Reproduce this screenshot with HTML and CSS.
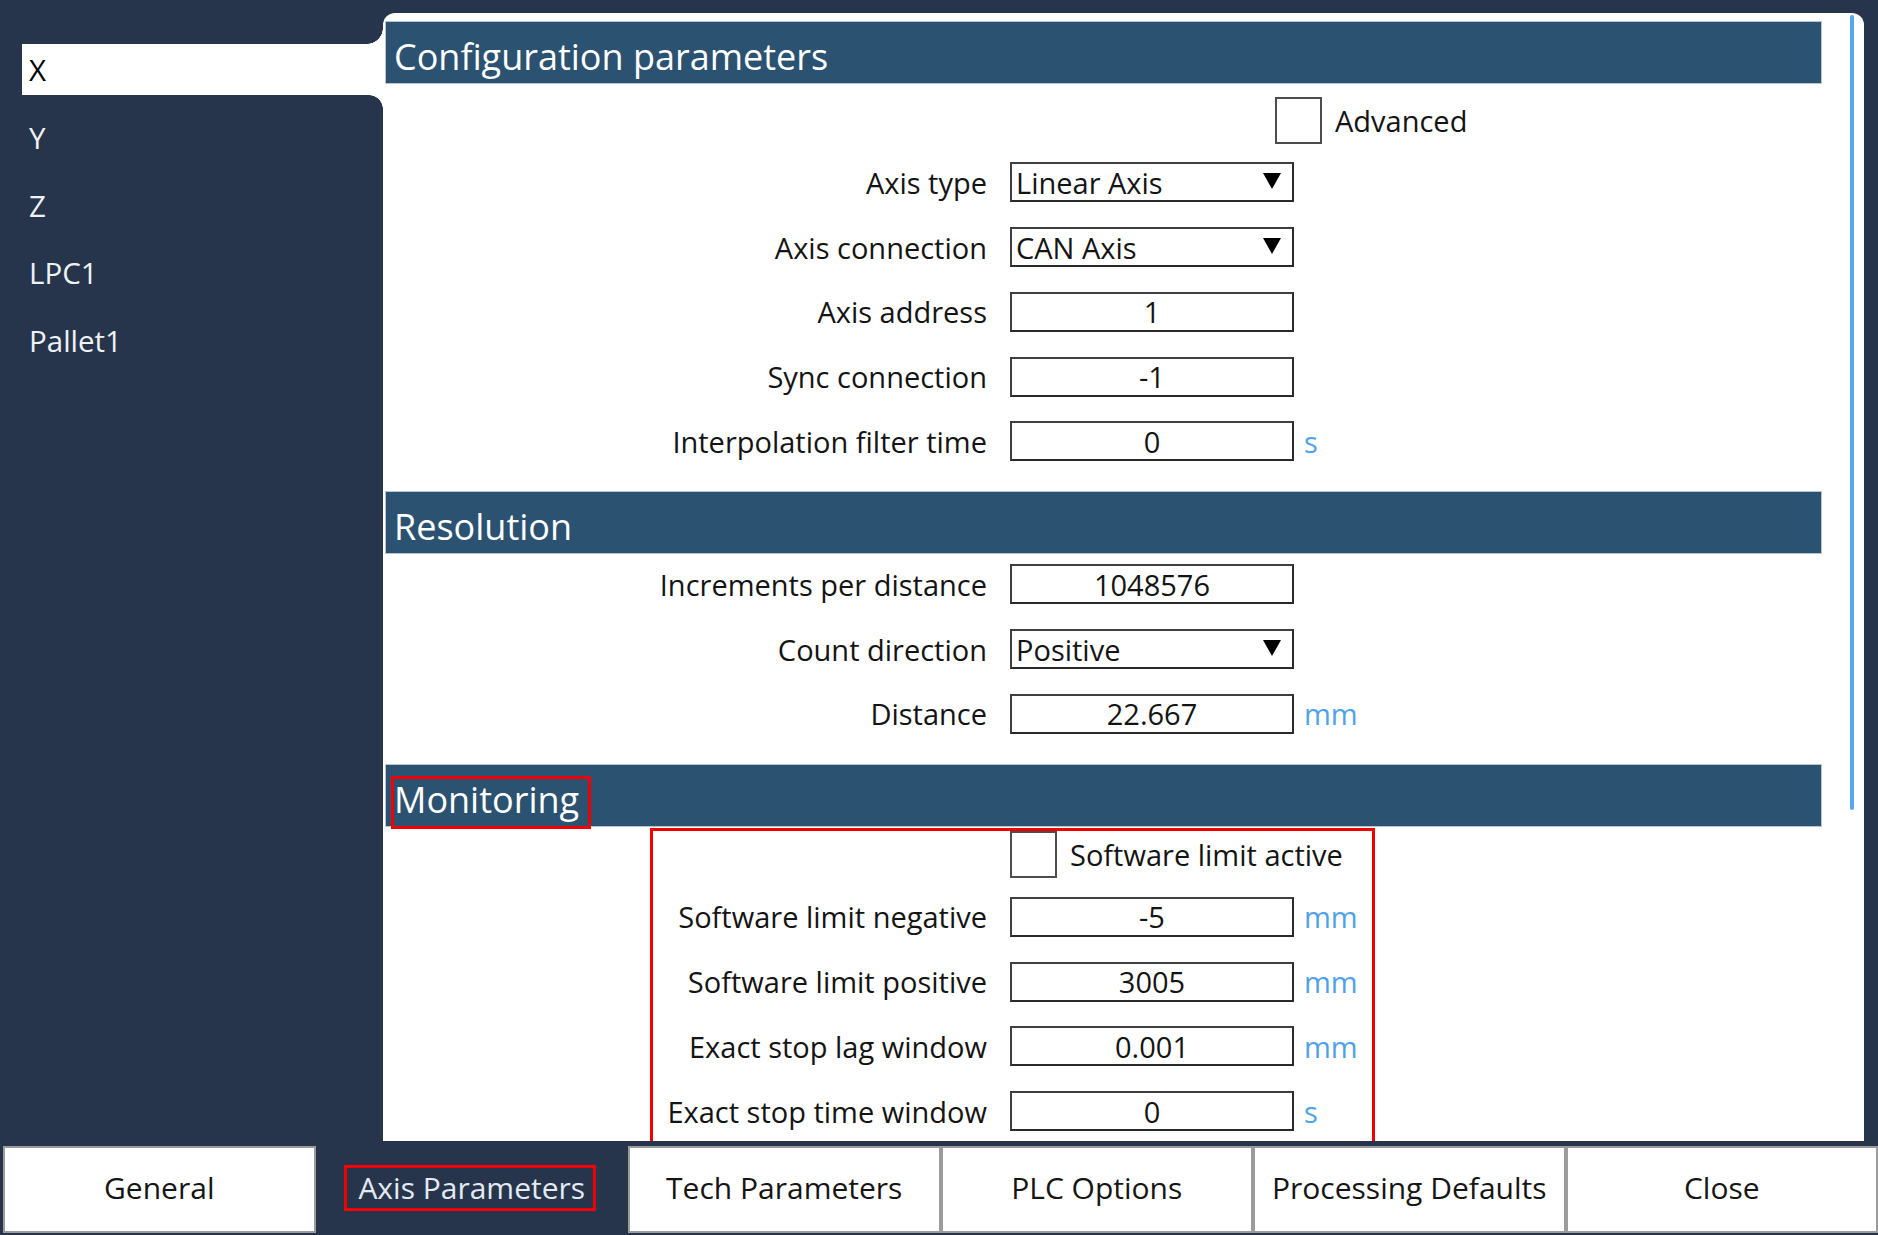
FILE: index.html
```html
<!DOCTYPE html>
<html lang="en">
<head>
<meta charset="utf-8">
<title>Axis Parameters</title>
<link rel="stylesheet" href="styles.css">
</head>
<body>
<div class="app">
  <div class="main">
    <nav class="sidebar">
      <div class="side-item active">X</div>
      <div class="side-item">Y</div>
      <div class="side-item">Z</div>
      <div class="side-item">LPC1</div>
      <div class="side-item">Pallet1</div>
    </nav>
    <section class="panel">
      <div class="scroll-thumb"></div>

      <div class="group">
        <h2 class="band"><span class="band-title">Configuration parameters</span></h2>
        <div class="group-body pad-top">
          <div class="row check-row">
            <span class="cb cb-adv"></span><span class="cb-label">Advanced</span>
          </div>
          <div class="row">
            <span class="lbl">Axis type</span>
            <div class="field select"><span class="sel-text">Linear Axis</span><svg class="arrow" viewBox="0 0 18 16" width="18" height="16"><polygon points="0,0 18,0 9,16" fill="#000"/></svg></div>
          </div>
          <div class="row">
            <span class="lbl">Axis connection</span>
            <div class="field select"><span class="sel-text">CAN Axis</span><svg class="arrow" viewBox="0 0 18 16" width="18" height="16"><polygon points="0,0 18,0 9,16" fill="#000"/></svg></div>
          </div>
          <div class="row">
            <span class="lbl">Axis address</span>
            <div class="field">1</div>
          </div>
          <div class="row">
            <span class="lbl">Sync connection</span>
            <div class="field">-1</div>
          </div>
          <div class="row">
            <span class="lbl">Interpolation filter time</span>
            <div class="field">0</div>
            <span class="unit">s</span>
          </div>
        </div>
      </div>

      <div class="group">
        <h2 class="band"><span class="band-title">Resolution</span></h2>
        <div class="group-body">
          <div class="row">
            <span class="lbl">Increments per distance</span>
            <div class="field">1048576</div>
          </div>
          <div class="row">
            <span class="lbl">Count direction</span>
            <div class="field select"><span class="sel-text">Positive</span><svg class="arrow" viewBox="0 0 18 16" width="18" height="16"><polygon points="0,0 18,0 9,16" fill="#000"/></svg></div>
          </div>
          <div class="row">
            <span class="lbl">Distance</span>
            <div class="field">22.667</div>
            <span class="unit">mm</span>
          </div>
        </div>
      </div>

      <div class="group">
        <h2 class="band"><span class="band-title hl-title">Monitoring</span></h2>
        <div class="group-body hl-body">
          <div class="row check-row">
            <span class="cb"></span><span class="cb-label">Software limit active</span>
          </div>
          <div class="row">
            <span class="lbl">Software limit negative</span>
            <div class="field">-5</div>
            <span class="unit">mm</span>
          </div>
          <div class="row">
            <span class="lbl">Software limit positive</span>
            <div class="field">3005</div>
            <span class="unit">mm</span>
          </div>
          <div class="row">
            <span class="lbl">Exact stop lag window</span>
            <div class="field">0.001</div>
            <span class="unit">mm</span>
          </div>
          <div class="row">
            <span class="lbl">Exact stop time window</span>
            <div class="field">0</div>
            <span class="unit">s</span>
          </div>
        </div>
      </div>
    </section>
  </div>

  <div class="tabs">
    <div class="tab">General</div>
    <div class="tab selected"><span class="hl-tab">Axis Parameters</span></div>
    <div class="tab">Tech Parameters</div>
    <div class="tab">PLC Options</div>
    <div class="tab">Processing Defaults</div>
    <div class="tab">Close</div>
  </div>
</div>
</body>
</html>
```

FILE: styles.css
```css
* { box-sizing: border-box; }

html, body {
  margin: 0;
  padding: 0;
}

body {
  width: 1878px;
  height: 1235px;
  overflow: hidden;
  background: #26354b;
  font-family: "Open Sans", "Noto Sans", "DejaVu Sans", sans-serif;
  color: #141414;
}

.app {
  display: flex;
  flex-direction: column;
  height: 1235px;
}

.main {
  display: flex;
  height: 1146px;
}

/* ---------- sidebar ---------- */
.sidebar {
  width: 383px;
  flex: none;
  padding: 44px 0 0 22px;
  display: flex;
  flex-direction: column;
  gap: 16.75px;
}

.side-item {
  position: relative;
  height: 51px;
  display: flex;
  align-items: center;
  padding-left: 7px;
  font-size: 29.5px;
  color: #eef2f6;
}

.side-item.active {
  background: #ffffff;
  color: #000;
}

.side-item.active::before {
  content: "";
  position: absolute;
  right: 0;
  top: -16px;
  width: 16px;
  height: 16px;
  background: radial-gradient(circle at 0 0, rgba(255,255,255,0) 15.5px, #ffffff 16px);
}

.side-item.active::after {
  content: "";
  position: absolute;
  right: 0;
  bottom: -14px;
  width: 14px;
  height: 14px;
  background: radial-gradient(circle at 0 100%, rgba(255,255,255,0) 13.5px, #ffffff 14px);
}

/* ---------- panel ---------- */
.panel {
  position: relative;
  flex: 1;
  margin: 13px 14px 5px 0;
  background: #ffffff;
  border-radius: 12px 12px 0 0;
  padding: 9px 43px 0 3px;
  overflow: hidden;
}

.scroll-thumb {
  position: absolute;
  right: 10px;
  top: 2px;
  width: 4px;
  height: 795px;
  border-radius: 2px;
  background: #57a7ee;
}

.group {
  margin-bottom: 17.25px;
}

.band {
  margin: 0;
  height: 61px;
  background: #2b5271;
  box-shadow: 0 0 0 1px #b9c6d2;
  display: flex;
  align-items: center;
  padding: 8px 0 0 8px;
  font-weight: 400;
  font-size: 36px;
  color: #ffffff;
}

.band-title {
  display: inline-block;
  position: relative;
  line-height: normal;
}

.hl-title::after {
  content: "";
  position: absolute;
  left: -3px;
  right: -12px;
  top: 1px;
  bottom: -5px;
  border: 3px solid #f00000;
}

.group-body {
  position: relative;
}

.group-body.pad-top {
  padding-top: 8px;
}

.hl-body::after {
  content: "";
  position: absolute;
  left: 264px;
  top: 2px;
  width: 719px;
  height: 311px;
  border: 3px solid #f00000;
  pointer-events: none;
}

.row {
  display: flex;
  align-items: center;
  height: 64.75px;
  padding-bottom: 2px;
  font-size: 29px;
}

.row.check-row {
  height: 60px;
  padding-left: 624px;
}

.lbl {
  width: 601px;
  text-align: right;
  white-space: nowrap;
}

.field {
  margin-left: 23px;
  width: 284px;
  height: 40px;
  border: 2px solid #3f3f3f;
  border-right-color: #2a2a2a;
  border-bottom-color: #2a2a2a;
  background: #ffffff;
  display: flex;
  align-items: center;
  justify-content: center;
  line-height: 1;
  white-space: nowrap;
}

.field.select {
  justify-content: space-between;
  padding: 0 11px 0 4px;
}

.arrow {
  display: block;
  margin-top: -3px;
}

.unit {
  margin-left: 10px;
  color: #4fa2ea;
}

.cb {
  width: 47px;
  height: 47px;
  border: 2px solid #4d4d4d;
  background: #ffffff;
  flex: none;
}

.cb-adv {
  margin-left: 265px;
}

.cb-label {
  margin-left: 13px;
  white-space: nowrap;
}

/* ---------- bottom tabs ---------- */
.tabs {
  display: flex;
  height: 87px;
  padding-left: 3px;
}

.tab {
  flex: 1;
  display: flex;
  align-items: center;
  justify-content: center;
  background: #ffffff;
  border: 2px solid #9c9c9c;
  padding-bottom: 5px;
  font-size: 30px;
  color: #151515;
  white-space: nowrap;
}

.tab.selected {
  background: #26354b;
  border-color: #26354b;
  color: #e4eaf1;
}

.hl-tab {
  position: relative;
  display: inline-block;
  line-height: normal;
}

.hl-tab::after {
  content: "";
  position: absolute;
  left: -14px;
  right: -11px;
  top: -2px;
  bottom: -3px;
  border: 3px solid #f00000;
}
```
